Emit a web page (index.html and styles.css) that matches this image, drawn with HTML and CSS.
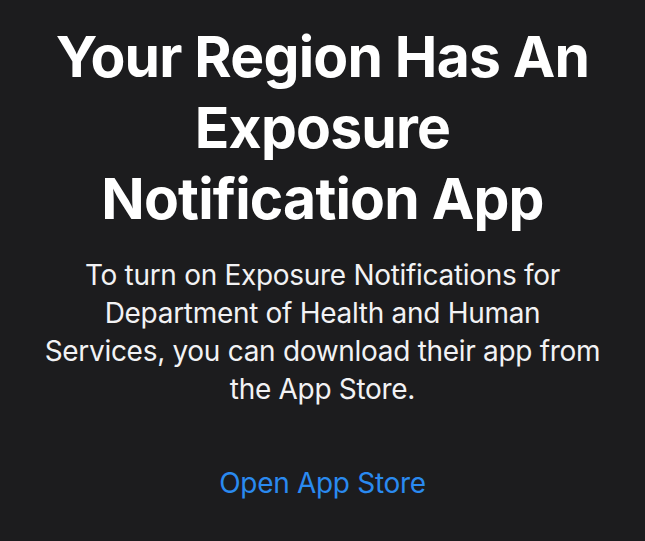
FILE: index.html
```html
<!DOCTYPE html>
<html>
<head>
<meta charset="utf-8">
<link rel="stylesheet" href="styles.css">
</head>
<body>
<main class="screen">
  <h1 class="title">Your Region Has An<br>Exposure<br>Notification App</h1>
  <p class="body">To turn on Exposure Notifications for<br>Department of Health and Human<br>Services, you can download their app from<br>the App Store.</p>
  <a class="link" href="#">Open App Store</a>
</main>
</body>
</html>
```
FILE: styles.css
```css
html, body {
  margin: 0;
  padding: 0;
  background: #1c1c1e;
}
.screen {
  width: 645px;
  height: 541px;
  display: flex;
  flex-direction: column;
  align-items: center;
  padding-top: 21px;
  box-sizing: border-box;
  font-family: Inter, "Liberation Sans", sans-serif;
  text-align: center;
  overflow: hidden;
}
.title {
  margin: 0;
  color: #ffffff;
  font-size: 57px;
  font-weight: 700;
  line-height: 71px;
  letter-spacing: -0.8px;
}
.body {
  margin: 22px 0 0;
  color: #f2f2f4;
  font-size: 28px;
  font-weight: 400;
  line-height: 38px;
  letter-spacing: -0.3px;
}
.link {
  margin-top: 56px;
  color: #2a8af0;
  font-size: 28px;
  line-height: 38px;
  text-decoration: none;
  letter-spacing: -0.3px;
}
```
